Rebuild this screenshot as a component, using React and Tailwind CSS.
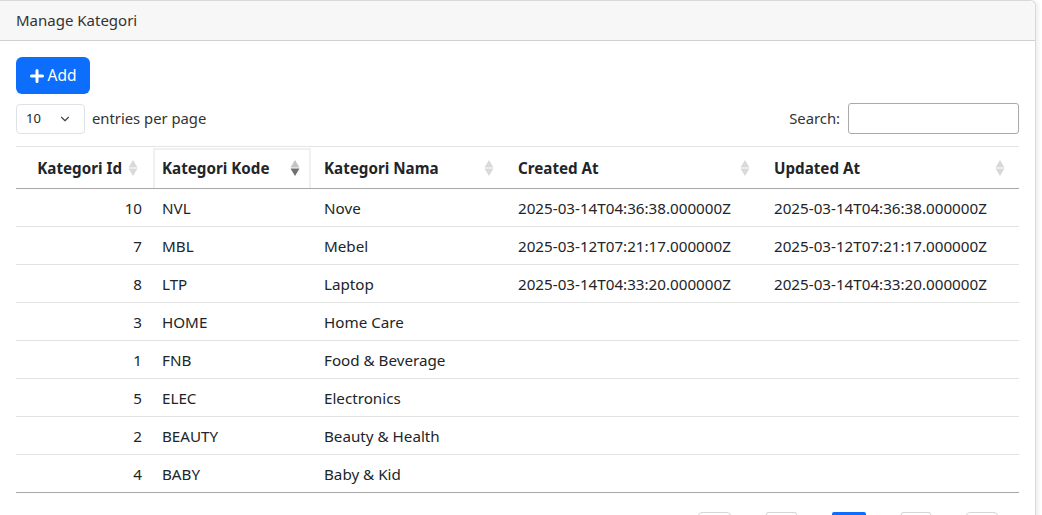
import { ChevronDown } from 'lucide-react'

const rows = [
  { id: 10, kode: 'NVL', nama: 'Nove', created: '2025-03-14T04:36:38.000000Z', updated: '2025-03-14T04:36:38.000000Z' },
  { id: 7, kode: 'MBL', nama: 'Mebel', created: '2025-03-12T07:21:17.000000Z', updated: '2025-03-12T07:21:17.000000Z' },
  { id: 8, kode: 'LTP', nama: 'Laptop', created: '2025-03-14T04:33:20.000000Z', updated: '2025-03-14T04:33:20.000000Z' },
  { id: 3, kode: 'HOME', nama: 'Home Care', created: '', updated: '' },
  { id: 1, kode: 'FNB', nama: 'Food & Beverage', created: '', updated: '' },
  { id: 5, kode: 'ELEC', nama: 'Electronics', created: '', updated: '' },
  { id: 2, kode: 'BEAUTY', nama: 'Beauty & Health', created: '', updated: '' },
  { id: 4, kode: 'BABY', nama: 'Baby & Kid', created: '', updated: '' },
]

function SortIcon({ active }) {
  return (
    <svg width="10" height="18" viewBox="0 0 10 18" className="shrink-0">
      <path d="M5 1 L9.5 8.5 H0.5 Z" fill={active ? '#c4c4c4' : '#d9d9d9'} />
      <path d="M5 17 L9.5 9.5 H0.5 Z" fill={active ? '#707070' : '#d9d9d9'} />
    </svg>
  )
}

export default function App() {
  return (
    <div className="min-h-screen bg-white text-[#212529]" style={{ fontFamily: '"Noto Sans", "Open Sans", sans-serif' }}>
      <div className="w-[1036px] bg-white border border-l-0 border-[#d9d9d9] rounded-tr-[6px] shadow-[2px_0_4px_rgba(0,0,0,0.08)]">
        {/* Card header */}
        <div className="h-[40px] bg-[#f7f7f7] border-b border-[#d0d0d0] rounded-tr-[6px] flex items-center pl-4 text-[15px] text-[#333]">
          Manage Kategori
        </div>

        <div className="px-4 pt-4">
          <button className="h-[37px] w-[74px] bg-[#0d6efd] rounded-[6px] text-white text-[15.5px] flex items-center justify-center gap-1">
            <svg width="14" height="14" viewBox="0 0 14 14">
              <path d="M7 1.5 V12.5 M1.5 7 H12.5" stroke="white" strokeWidth="3" strokeLinecap="round" />
            </svg>
            Add
          </button>

          <div className="flex items-center justify-between mt-[9px]">
            <div className="flex items-center gap-[7px]">
              <div className="h-[30px] w-[69px] border border-[#dee2e6] rounded-[4px] flex items-center justify-between pl-[9px] pr-[12px] text-[13px]">
                10
                <ChevronDown size={14} strokeWidth={2} className="text-[#444]" />
              </div>
              <span className="text-[14.8px] text-[#333]">entries per page</span>
            </div>
            <div className="flex items-center gap-[8px]">
              <span className="text-[14.8px] text-[#333]">Search:</span>
              <div className="h-[31px] w-[171px] border border-[#aaa] rounded-[3px]" />
            </div>
          </div>

          <table className="w-[1003px] mt-[12px] border-collapse text-[15.2px] table-fixed">
            <colgroup>
              <col className="w-[136px]" />
              <col className="w-[160px]" />
              <col className="w-[196px]" />
              <col className="w-[256px]" />
              <col className="w-[255px]" />
            </colgroup>
            <thead>
              <tr className="h-[42px] border-t border-[#e4e4e4] border-b border-b-[#a8a8a8]">
                <th className="font-bold text-right pr-[14px] pt-[2px]">
                  <div className="flex items-center justify-end gap-[6px]">Kategori Id <SortIcon /></div>
                </th>
                <th className="font-bold text-left relative pt-[2px]">
                  <div className="absolute inset-x-[1px] top-[1px] bottom-0 border-2 border-b-0 border-[#f0f0f0]" />
                  <div className="flex items-center justify-between pl-[10px] pr-[12px]">Kategori Kode <SortIcon active /></div>
                </th>
                <th className="font-bold text-left pt-[2px]">
                  <div className="flex items-center justify-between pl-[12px] pr-[14px]">Kategori Nama <SortIcon /></div>
                </th>
                <th className="font-bold text-left pt-[2px]">
                  <div className="flex items-center justify-between pl-[10px] pr-[14px]">Created At <SortIcon /></div>
                </th>
                <th className="font-bold text-left pt-[2px]">
                  <div className="flex items-center justify-between pl-[10px] pr-[14px]">Updated At <SortIcon /></div>
                </th>
              </tr>
            </thead>
            <tbody>
              {rows.map((r, i) => (
                <tr key={r.id} className={`h-[38px] ${i === rows.length - 1 ? 'border-b border-[#a8a8a8]' : 'border-b border-[#e2e2e2]'}`}>
                  <td className="text-right pr-[10px] pt-[2px]">{r.id}</td>
                  <td className="pl-[10px] pt-[2px]">{r.kode}</td>
                  <td className="pl-[12px] pt-[2px]">{r.nama}</td>
                  <td className="pl-[10px] pt-[2px] whitespace-nowrap">{r.created}</td>
                  <td className="pl-[10px] pt-[2px] whitespace-nowrap">{r.updated}</td>
                </tr>
              ))}
            </tbody>
          </table>

          <div className="flex justify-end pr-[21px] mt-[19px] gap-[35px]">
            <div className="w-[33px] h-[32px] border border-[#d6d6d6] rounded-[4px]" />
            <div className="w-[31px] h-[32px] border border-[#d6d6d6] rounded-[2px]" />
            <div className="w-[34px] h-[32px] bg-[#0d6efd] rounded-[2px]" />
            <div className="w-[30px] h-[32px] border border-[#d6d6d6] rounded-[2px]" />
            <div className="w-[32px] h-[32px] border border-[#d6d6d6] rounded-[4px]" />
          </div>
        </div>
      </div>
    </div>
  )
}
